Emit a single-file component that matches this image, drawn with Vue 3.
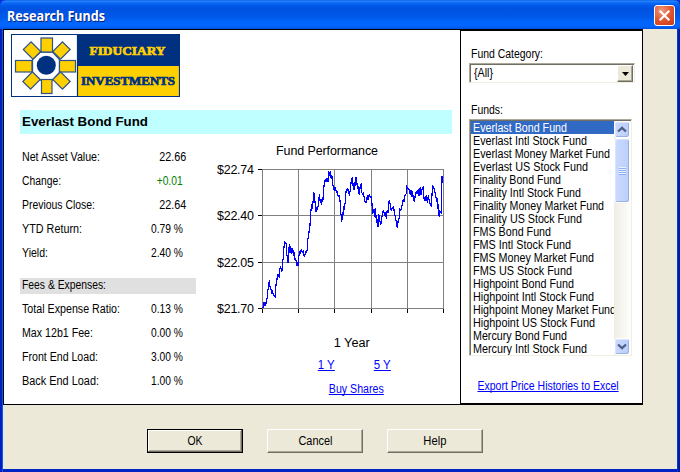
<script setup>
const quote = [
  { label: 'Net Asset Value:', lw: 78, value: '22.66', vw: 27, pad: 10 },
  { label: 'Change:', lw: 39, value: '+0.01', vw: 26, pad: 12, up: true },
  { label: 'Previous Close:', lw: 73, value: '22.64', vw: 27, pad: 10 },
  { label: 'YTD Return:', lw: 60, value: '0.79 %', vw: 32, pad: 12 },
  { label: 'Yield:', lw: 26, value: '2.40 %', vw: 32, pad: 12 },
]
const fees = [
  { label: 'Total Expense Ratio:', lw: 98, value: '0.13 %', vw: 32, pad: 12 },
  { label: 'Max 12b1 Fee:', lw: 71, value: '0.00 %', vw: 32, pad: 12 },
  { label: 'Front End Load:', lw: 76, value: '3.00 %', vw: 32, pad: 12 },
  { label: 'Back End Load:', lw: 77, value: '1.00 %', vw: 32, pad: 12 },
]
const funds = [
  ['Everlast Bond Fund', 94], ['Everlast Intl Stock Fund', 114],
  ['Everlast Money Market Fund', 137], ['Everlast US Stock Fund', 115],
  ['Finality Bond Fund', 88], ['Finality Intl Stock Fund', 108],
  ['Finality Money Market Fund', 131], ['Finality US Stock Fund', 109],
  ['FMS Bond Fund', 78], ['FMS Intl Stock Fund', 98],
  ['FMS Money Market Fund', 121], ['FMS US Stock Fund', 99],
  ['Highpoint Bond Fund', 101], ['Highpoint Intl Stock Fund', 121],
  ['Highpoint Money Market Fund', 143], ['Highpoint US Stock Fund', 122],
  ['Mercury Bond Fund', 94], ['Mercury Intl Stock Fund', 114],
]
const gridX = [57.5, 93.5, 129.5, 166.5, 202.5, 238.5]
const gridY = [
  { y: 34.5, label: '$22.74' }, { y: 80.5, label: '$22.40' },
  { y: 127.5, label: '$22.05' }, { y: 173.5, label: '$21.70' },
]
// Price series, in thirds of a pixel
const prices = '174,518 176,502 178,514 180,502 182,514 184,494 187,490 187,466 190,462 193,436 195,456 198,462 200,478 203,470 206,482 210,486 212,448 214,454 217,420 222,424 223,404 226,400 227,392 229,408 232,406 232,378 235,372 236,344 239,322 244,326 245,360 248,362 249,384 251,362 253,326 255,354 257,334 260,358 263,338 266,362 269,352 270,374 274,376 276,390 279,390 280,362 283,360 285,348 287,356 289,342 292,352 294,348 296,362 299,364 302,350 305,352 307,340 308,314 311,300 312,290 315,270 317,236 320,206 322,222 325,190 326,170 329,192 333,230 336,218 338,222 341,200 343,178 346,204 348,192 350,210 352,188 355,192 357,152 361,132 363,142 366,130 369,142 370,108 373,122 376,108 378,130 381,122 383,146 386,160 388,165 391,155 394,172 397,170 400,185 403,182 406,205 406,238 409,240 410,262 412,242 414,240 415,215 418,220 421,200 421,170 425,172 427,158 431,170 433,182 436,165 437,152 440,130 443,128 444,150 447,165 450,150 451,128 455,128 456,148 459,155 460,175 463,178 466,150 469,148 470,172 473,178 475,172 477,185 480,200 485,202 487,180 490,195 493,178 496,188 499,186 501,208 503,238 507,222 508,246 511,220 512,248 515,240 517,274 520,274 521,236 524,256 528,268 530,246 533,240 535,224 538,238 541,230 544,252 546,230 549,232 551,200 554,198 556,212 559,228 562,218 566,216 568,232 572,250 574,262 577,278 580,254 584,246 585,222 589,224 592,206 595,192 597,200 600,180 604,176 605,154 608,160 612,162 616,180 618,164 620,186 622,168 625,190 628,200 631,180 634,168 636,178 640,162 642,182 646,156 648,180 651,162 655,156 657,190 660,196 664,180 667,205 670,180 674,205 679,212 681,180 683,150 688,164 692,180 695,200 698,190 700,238 703,246 705,228 708,234 710,200 711,124 714,145'

// Condenses a label horizontally to the given width
const vFit = {
  mounted(el, { value }) {
    const w = el.getBoundingClientRect().width
    if (w) el.style.transform = `scaleX(${value / w})`
  },
}
</script>

<template>
  <div class="window">
    <header class="titlebar">
      <span v-fit="98" class="t title">Research Funds</span>
      <button class="close" aria-label="Close">
        <svg width="13" height="13" viewBox="0 0 13 13"><path d="M1.7 1.7 11.3 11.3M11.3 1.7 1.7 11.3" stroke="#fff" stroke-width="2.2" /></svg>
      </button>
    </header>

    <div class="client">
      <main class="sheet">
        <section class="fund">
          <svg class="logo" width="169" height="64" viewBox="11 34 169 64">
            <rect x="11.5" y="34.5" width="168" height="62" fill="#fff" stroke="#003080" />
            <rect x="77" y="34" width="102" height="32" fill="#003080" />
            <rect x="78" y="66" width="101" height="30" fill="#ffd000" />
            <path d="M77.5 34v63M11 96.5h169M179.5 34v63" stroke="#003080" stroke-width="1.2" />
            <path d="M40.500 52h12l7 7.500v13l-7 7.500h-12l-8-7.500v-13z" fill="#fff" stroke="#2a5296" stroke-width="1.300" />
            <circle cx="46.300" cy="65.300" r="9.500" fill="#003080" />
            <g fill="#ffd000" stroke="#2f5288" stroke-width="1.200">
              <rect x="41" y="38" width="11.500" height="14" />
              <rect x="41.500" y="79.500" width="10.500" height="14" />
              <rect x="15.500" y="60.500" width="16.500" height="11.500" />
              <rect x="59.500" y="60.500" width="16" height="11.500" />
              <rect x="-5.500" y="-6.800" width="11" height="13.600" transform="translate(32 50.500) rotate(-45)" />
              <rect x="-5.500" y="-6.800" width="11" height="13.600" transform="translate(61.500 50.500) rotate(45)" />
              <rect x="-5.500" y="-6.800" width="11" height="13.600" transform="translate(31.500 80.500) rotate(45)" />
              <rect x="-5.500" y="-6.800" width="11" height="13.600" transform="translate(61.500 80.500) rotate(-45)" />
            </g>
            <g font-family="'Liberation Serif', serif" font-weight="bold" font-size="13" stroke-width=".7">
              <text x="89.500" y="55" textLength="76" lengthAdjust="spacingAndGlyphs" fill="#ffd000" stroke="#ffd000">FIDUCIARY</text>
              <text x="81" y="85" textLength="94" lengthAdjust="spacingAndGlyphs" fill="#003080" stroke="#003080">INVESTMENTS</text>
            </g>
          </svg>

          <h1 class="name"><span v-fit="126" class="t">Everlast Bond Fund</span></h1>

          <div class="columns">
            <div class="facts">
              <div v-for="r in quote" :key="r.label" class="row">
                <span v-fit="r.lw" class="t">{{ r.label }}</span>
                <span v-fit="r.vw" class="t right" :class="{ up: r.up, wide: r.pad === 10 }">{{ r.value }}</span>
              </div>
              <h2 class="fees"><span v-fit="84" class="t">Fees &amp; Expenses:</span></h2>
              <div v-for="r in fees" :key="r.label" class="row">
                <span v-fit="r.lw" class="t">{{ r.label }}</span>
                <span v-fit="r.vw" class="t right">{{ r.value }}</span>
              </div>
            </div>

            <div class="performance">
              <svg class="chart" width="245" height="182" viewBox="0 0 245 182">
                <text x="71" y="20" textLength="102">Fund Performance</text>
                <g v-for="g in gridY" :key="g.label">
                  <text x="12" :y="g.y + 4.5" textLength="37">{{ g.label }}</text>
                  <path :d="`M53 ${g.y}h5`" stroke="#000" />
                </g>
                <path v-for="x in gridX" :key="'t' + x" :d="`M${x} 174v4`" stroke="#000" />
                <path v-for="x in gridX" :key="x" :d="`M${x} 34v140`" stroke="#808080" />
                <path v-for="g in gridY" :key="g.y" :d="`M57 ${g.y}h182`" stroke="#808080" />
                <polyline :points="prices" transform="scale(.33333)" fill="none" stroke="#00f" stroke-width="3.600" shape-rendering="crispEdges" />
              </svg>
              <div class="period"><span v-fit="36" class="t mid">1 Year</span></div>
              <nav class="ranges">
                <a class="range"><span v-fit="17" class="t mid">1 Y</span></a>
                <a class="range"><span v-fit="17" class="t mid">5 Y</span></a>
              </nav>
              <a class="buy"><span v-fit="55" class="t mid">Buy Shares</span></a>
            </div>
          </div>
        </section>

        <aside class="picker">
          <label class="caption"><span v-fit="72" class="t">Fund Category:</span></label>
          <div class="combo">
            <span v-fit="19" class="t">{All}</span>
            <button class="drop" aria-label="Open">
              <svg width="7" height="4" viewBox="0 0 7 4"><path d="M0 0h7L3.500 4z" /></svg>
            </button>
          </div>
          <label class="caption second"><span v-fit="32" class="t">Funds:</span></label>
          <div class="listbox">
            <ul class="items">
              <li v-for="(f, i) in funds" :key="f[0]" :class="{ selected: i === 0 }">
                <span v-fit="f[1]" class="t">{{ f[0] }}</span>
              </li>
            </ul>
            <div class="scroll">
              <div class="sb">
                <svg width="10" height="7" viewBox="0 0 10 7"><path d="M1 5.500 5 1.800 9 5.500" fill="none" stroke="#4d6185" stroke-width="2.300" /></svg>
              </div>
              <div class="sb thumb"><i /><i /><i /><i /></div>
              <div class="space" />
              <div class="sb">
                <svg width="10" height="7" viewBox="0 0 10 7"><path d="M1 1.500 5 5.200 9 1.500" fill="none" stroke="#4d6185" stroke-width="2.300" /></svg>
              </div>
            </div>
          </div>
          <a class="export"><span v-fit="141" class="t mid">Export Price Histories to Excel</span></a>
        </aside>
      </main>

      <footer class="actions">
        <button class="btn default"><span v-fit="15" class="t mid">OK</span></button>
        <button class="btn"><span v-fit="34" class="t mid">Cancel</span></button>
        <button class="btn"><span v-fit="23" class="t mid">Help</span></button>
      </footer>
    </div>
  </div>
</template>

<style>
body { margin: 0; background: #ece9d8; }
</style>

<style scoped>
* { box-sizing: border-box; }
.window {
  width: 680px; height: 472px; overflow: hidden;
  display: flex; flex-direction: column;
  background: #0831d9;
  font: 12.5px/24px "Liberation Sans", Arial, sans-serif; color: #000;
}
.t { display: inline-block; white-space: nowrap; transform-origin: 0 50%; flex: none; }
.mid { transform-origin: 50% 50%; }
.right { transform-origin: 100% 50%; }
.up { color: #008000; }
button { padding: 0; font: inherit; color: inherit; }
.titlebar {
  height: 29px; flex: none; display: flex; justify-content: space-between; align-items: flex-start;
  padding: 5px 5px 0 7px;
  border-radius: 6px 6px 0 0;
  background: linear-gradient(#0058e6 0, #2a86f8 1px, #0b68f5 3px, #0058e8 6px, #0053e0 9px, #0057e8 16px, #0165fb 22px, #0166ff 26px, #0150dc 29px);
}
.title { font: bold 13.5px/22px "Noto Sans", "Open Sans", sans-serif; color: #fff; text-shadow: 1px 1px 0 #0a1f7a; }
.close {
  width: 21px; height: 21px; display: grid; place-items: center;
  border: 1px solid #fff; border-radius: 3px;
  background: radial-gradient(circle at 35% 25%, #ee9b80, #e0562f 50%, #c93611);
}
.client {
  flex: 1; margin: 0 3px; background: #ece9d8; border-bottom: 3px solid #0024c4;
  box-shadow: 1px 0 0 #0138dc, 3px 0 0 #001da0, -1px 0 0 #0a5cf0, -3px 0 0 #001ec0;
}
.sheet { width: 640px; height: 376px; border: 1px solid #000; background: #fff; display: flex; }
.fund { width: 456px; padding: 4px 8px 0 7px; }
.logo { display: block; }
.name {
  margin: 12px 0 0 9px; width: 432px; height: 24px; padding-left: 2px;
  background: #c0ffff; font: bold 13.5px/24px "Liberation Sans", Arial, sans-serif;
}
.columns { display: flex; margin-left: 9px; }
.facts { width: 176px; padding-top: 11px; flex: none; }
.row { display: flex; justify-content: space-between; height: 24px; padding-left: 2px; }
.row .right { margin-right: 13px; }
.row .wide { margin-right: 10px; }
.fees {
  margin: 13px 0 3px; height: 16px; padding-left: 2px; background: #e0e0e0;
  font: 12.5px/15px "Liberation Sans", Arial, sans-serif;
}
.performance { margin-left: 9px; padding-top: 1px; width: 245px; flex: none; display: flex; flex-direction: column; }
.chart { display: block; font-size: 12.5px; }
.period { margin-top: 14px; height: 22px; padding-left: 48px; text-align: center; }
.ranges { display: flex; justify-content: center; gap: 40px; padding-left: 53px; height: 24px; }
.range { width: 16px; display: flex; justify-content: center; }
.ranges, .buy, .export { color: #00f; text-decoration: none; }
.range .t, .buy .t, .export .t { text-decoration: underline; text-underline-offset: 1px; text-decoration-thickness: 1px; text-decoration-skip-ink: none; }
.buy { text-align: center; padding-left: 57px; }
.picker { width: 183px; height: 374px; flex: none; border: 1px solid #000; border-right: 0; padding: 11px 8px 0; }
.caption { display: block; height: 21px; padding-left: 2px; }
.combo {
  width: 166px; height: 20px; display: flex; justify-content: space-between;
  border: 1px solid; border-color: #aca899 #f1efe2 #f1efe2 #aca899;
  box-shadow: inset 1px 1px 0 #716f64; padding: 1px 1px 0 4px; line-height: 17px;
}
.drop {
  width: 16px; height: 17px; display: grid; place-items: center; background: #ece9d8;
  border: 1px solid; border-color: #fff #716f64 #716f64 #fff; box-shadow: inset -1px -1px 0 #aca899;
}
.caption.second { margin-top: 15px; }
.listbox {
  width: 163px; height: 237px; display: flex; border: 1px solid; border-color: #aca899 #f1efe2 #f1efe2 #aca899;
  box-shadow: inset 1px 1px 0 #716f64; padding: 1px 0 0 1px;
}
.items { width: 143px; margin: 0; padding: 0; list-style: none; overflow: hidden; flex: none; }
.items li { height: 13px; line-height: 15px; padding-left: 2px; }
.items .selected { background: #316ac5; color: #fff; }
.scroll { width: 17px; display: flex; flex-direction: column; background: linear-gradient(90deg, #eeede5, #fefefb); }
.sb {
  width: 16px; height: 17px; flex: none; display: flex; flex-direction: column; align-items: center; justify-content: center;
  border: 1px solid #fff; border-radius: 3px; background: linear-gradient(90deg, #cbdafd, #bccefb);
  box-shadow: inset -1px -1px 0 #98b1e4, inset 1px 1px 0 #d9e4ff;
}
.thumb { height: 65px; gap: 1px; }
.thumb i { width: 7px; height: 1px; background: #eef4fe; box-shadow: 0 1px 0 #8cb0f8; }
.space { flex: 1; }
.export { display: block; margin-top: 18px; height: 24px; text-align: center; margin-left: -9px; margin-right: -4px; }
.export .t { margin-left: -3px; }
.actions { display: flex; gap: 24px; padding: 24px 0 0 144px; }
.btn {
  width: 96px; height: 24px; line-height: 22px; text-align: center; background: #ece9d8;
  border: 1px solid; border-color: #fff #716f64 #716f64 #fff; box-shadow: inset -1px -1px 0 #aca899;
}
.btn.default { border-color: #000; box-shadow: inset -1px -1px 0 #716f64, inset 1px 1px 0 #fff, inset -2px -2px 0 #aca899; }
</style>
